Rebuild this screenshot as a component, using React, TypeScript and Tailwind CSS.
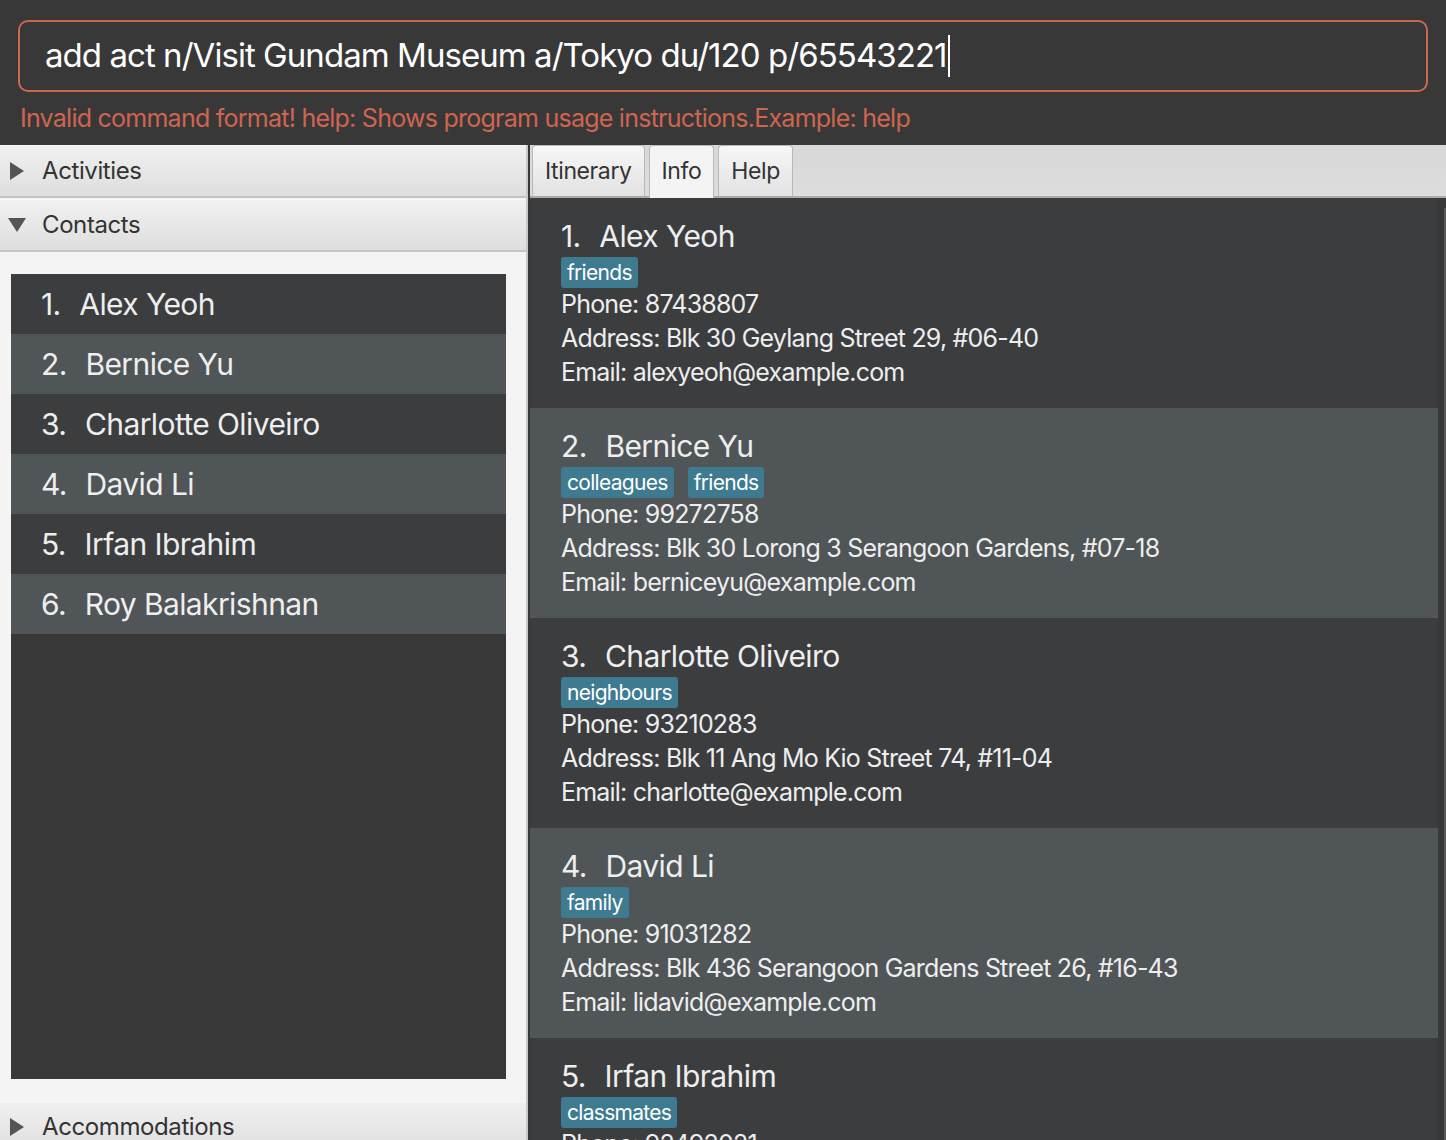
import React from "react"

const contacts = [
  {
    name: "Alex Yeoh",
    tags: ["friends"],
    phone: "87438807",
    address: "Blk 30 Geylang Street 29, #06-40",
    email: "alexyeoh@example.com",
  },
  {
    name: "Bernice Yu",
    tags: ["colleagues", "friends"],
    phone: "99272758",
    address: "Blk 30 Lorong 3 Serangoon Gardens, #07-18",
    email: "berniceyu@example.com",
  },
  {
    name: "Charlotte Oliveiro",
    tags: ["neighbours"],
    phone: "93210283",
    address: "Blk 11 Ang Mo Kio Street 74, #11-04",
    email: "charlotte@example.com",
  },
  {
    name: "David Li",
    tags: ["family"],
    phone: "91031282",
    address: "Blk 436 Serangoon Gardens Street 26, #16-43",
    email: "lidavid@example.com",
  },
  {
    name: "Irfan Ibrahim",
    tags: ["classmates"],
    phone: "92492021",
    address: "Blk 47 Tampines Street 20, #17-35",
    email: "irfan@example.com",
  },
  {
    name: "Roy Balakrishnan",
    tags: ["colleagues"],
    phone: "92624417",
    address: "Blk 45 Aljunied Street 85, #11-31",
    email: "royb@example.com",
  },
]

function Arrow({ open }: { open?: boolean }) {
  return open ? (
    <svg width="18" height="14" viewBox="0 0 18 14" className="shrink-0">
      <polygon points="0,0 18,0 9,14" fill="#545454" />
    </svg>
  ) : (
    <svg width="14" height="18" viewBox="0 0 14 18" className="shrink-0">
      <polygon points="0,0 14,9 0,18" fill="#545454" />
    </svg>
  )
}

function PaneHeader({ title, open }: { title: string; open?: boolean }) {
  return (
    <div className="h-[53px] shrink-0 flex items-center border-b-2 border-[#c4c4c4] bg-gradient-to-b from-[#f1f1f1] to-[#dedede] shadow-[inset_0_1px_0_#fafafa]">
      <div className={open ? "w-[42px] pl-[8px]" : "w-[42px] pl-[10px]"}>
        <Arrow open={open} />
      </div>
      <span className="text-[24px] text-[#333333] tracking-[-0.4px]">{title}</span>
    </div>
  )
}

function Tab({ label, selected }: { label: string; selected?: boolean }) {
  return (
    <div
      className={
        selected
          ? "h-[53px] -mb-[2px] pb-[2px] px-[12px] flex items-center rounded-t-[4px] border border-b-0 border-[#b8b8b8] bg-[#f4f4f4] text-[23px] text-[#333333] tracking-[-0.4px]"
          : "h-[51px] px-[12px] flex items-center rounded-t-[4px] border border-b-0 border-[#b8b8b8] bg-gradient-to-b from-[#f7f7f7] to-[#e2e2e2] text-[23px] text-[#333333] tracking-[-0.4px]"
      }
    >
      {label}
    </div>
  )
}

export default function App() {
  return (
    <div
      className="w-[1446px] h-[1140px] overflow-hidden flex flex-col bg-[#383838]"
      style={{ fontFamily: "Inter, 'Open Sans', sans-serif" }}
    >
      {/* command box */}
      <div className="h-[145px] shrink-0 px-[18px] pt-[20px]">
        <div className="h-[72px] border-2 border-[#d0654f] rounded-[10px] flex items-center px-[25px]">
          <span className="text-[33px] text-white tracking-[-0.95px]">
            add act n/Visit Gundam Museum a/Tokyo du/120 p/65543221
          </span>
          <span className="w-[2px] h-[42px] bg-white ml-[1px]"></span>
        </div>
        <div className="h-[53px] flex items-center px-[2px] text-[25px] text-[#d0654f] tracking-[-0.75px]">
          Invalid command format! help: Shows program usage instructions.Example: help
        </div>
      </div>

      <div className="flex flex-1 min-h-0">
        {/* left accordion */}
        <div className="w-[528px] shrink-0 flex flex-col bg-[#f4f4f4] border-r-2 border-[#c8c8c8] overflow-hidden">
          <PaneHeader title="Activities" />
          <div className="h-[1px] shrink-0 bg-[#f4f4f4]"></div>
          <PaneHeader title="Contacts" open />
          <div className="h-[849px] shrink-0 pt-[22px] pl-[11px] pr-[20px]">
            <div className="h-[805px] bg-[#383838]">
              {contacts.map((c, i) => (
                <div
                  key={c.name}
                  className={
                    i % 2 === 0
                      ? "h-[60px] flex items-center pl-[30px] bg-[#3c3d3f] text-[30px] text-[#eeeeee] tracking-[-0.6px] whitespace-pre"
                      : "h-[60px] flex items-center pl-[30px] bg-[#505557] text-[30px] text-[#eeeeee] tracking-[-0.6px] whitespace-pre"
                  }
                >
                  <span>{i + 1}.  </span>
                  <span className="pl-[3px]">{c.name}</span>
                </div>
              ))}
            </div>
          </div>
          <PaneHeader title="Accommodations" />
        </div>

        {/* right tabs */}
        <div className="flex-1 ml-[2px] flex flex-col min-w-0">
          <div className="h-[53px] shrink-0 flex items-end gap-[4px] pl-[2px] bg-gradient-to-b from-[#d8d8d8] to-[#dddddd] border-b-2 border-[#ababab] relative z-10">
            <Tab label="Itinerary" />
            <Tab label="Info" selected />
            <Tab label="Help" />
          </div>
          <div className="flex flex-1 min-h-0 bg-[#3c3d3f]">
            <div className="flex-1 min-w-0">
              {contacts.map((c, i) => (
                <div
                  key={c.name}
                  className={
                    i % 2 === 0
                      ? "h-[210px] bg-[#3c3d3f] pl-[31px] pt-[18px] text-[#eeeeee]"
                      : "h-[210px] bg-[#505557] pl-[31px] pt-[18px] text-[#eeeeee]"
                  }
                >
                  <div className="h-[41px] flex items-center text-[30px] tracking-[-0.6px] whitespace-pre">
                    <span>{i + 1}.  </span>
                    <span className="pl-[3px]">{c.name}</span>
                  </div>
                  <div className="h-[31px] flex gap-[14px]">
                    {c.tags.map((t) => (
                      <span
                        key={t}
                        className="h-[31px] px-[6px] flex items-center rounded-[3px] bg-[#3e7b91] text-[21px] text-white tracking-[-0.7px]"
                      >
                        {t}
                      </span>
                    ))}
                  </div>
                  <div className="h-[34px] flex items-center text-[25px] tracking-[-0.8px]">Phone: {c.phone}</div>
                  <div className="h-[34px] flex items-center text-[25px] tracking-[-0.8px]">Address: {c.address}</div>
                  <div className="h-[34px] flex items-center text-[25px] tracking-[-0.8px]">Email: {c.email}</div>
                </div>
              ))}
            </div>
            <div className="w-[8px] shrink-0 bg-[#383838] pt-[10px] flex justify-end">
              <div className="w-[2px] h-full bg-[#5a5a5a]"></div>
            </div>
          </div>
        </div>
      </div>
    </div>
  )
}
